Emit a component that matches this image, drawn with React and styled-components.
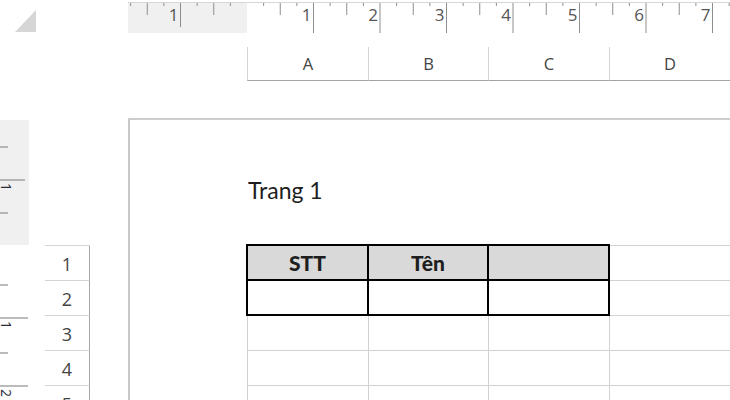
import React from "react";
import styled, { createGlobalStyle } from "styled-components";

const Global = createGlobalStyle`
  html, body { margin: 0; padding: 0; background: #fff; }
`;

const Frame = styled.div`
  width: 730px;
  height: 400px;
  overflow: hidden;
  background: #fff;
  display: flex;
  flex-direction: column;
  font-family: "Open Sans", "Liberation Sans", sans-serif;
`;

const TopBar = styled.div`
  display: flex;
  height: 33px;
  flex: none;
`;

const Corner = styled.div`
  width: 128px;
  flex: none;
  padding: 10px 0 0 15px;
  box-sizing: border-box;
`;

const HRuler = styled.div`
  flex: 1;
  margin-top: 2px;
  border-top: 1px solid #d6d6d6;
  background: linear-gradient(to right, #f0f0f0 0 119px, #fff 119px);
  overflow: hidden;
  svg { display: block; }
`;

const ColHeaderRow = styled.div`
  display: flex;
  margin-top: 14px;
  height: 34px;
  flex: none;
`;

const ColSpacer = styled.div`
  width: 247px;
  flex: none;
`;

const ColHead = styled.div`
  width: ${(p) => p.$w}px;
  flex: none;
  box-sizing: border-box;
  border-left: 1px solid #d5d5d5;
  border-bottom: 1px solid #a3a3a3;
  display: flex;
  align-items: center;
  justify-content: center;
  font-size: 16.5px;
  color: #444;
`;

const Body = styled.div`
  display: flex;
  margin-top: 37px;
  flex: 1;
  min-height: 0;
`;

const VRuler = styled.div`
  width: 29px;
  flex: none;
  background: linear-gradient(to bottom, #fff 0 2px, #f0f0f0 2px 127px, #fff 127px);
  svg { display: block; }
`;

const RowHeads = styled.div`
  width: 45px;
  margin-left: 16px;
  flex: none;
  padding-top: 127px;
`;

const RowHeadList = styled.div`
  border-top: 1px solid #d5d5d5;
`;

const RowHead = styled.div`
  height: 35px;
  box-sizing: border-box;
  border-bottom: 1px solid #d5d5d5;
  border-right: 1px solid #a6a6a6;
  display: flex;
  align-items: center;
  justify-content: center;
  font-size: 18px;
  color: #444;
  padding-top: 2px;
`;

const Page = styled.div`
  flex: 1;
  margin-left: 38px;
  border-top: 2px solid #cdcdcd;
  border-left: 2px solid #c8c8c8;
  padding-left: 116px;
  display: flex;
  flex-direction: column;
`;

const PageHeader = styled.div`
  height: 124px;
  box-sizing: border-box;
  padding: 59px 0 0 2px;
  font-family: Lato, "Open Sans", sans-serif;
  font-size: 23px;
  line-height: 22px;
  color: #1e1e1e;
  flex: none;
`;

const Sheet = styled.table`
  border-collapse: collapse;
  table-layout: fixed;
  width: 483px;
  flex: none;
`;

const Row = styled.tr`
  height: 35px;
`;

const Cell = styled.td`
  padding: 0;
  border: ${(p) => (p.$boxed ? "2px solid #000" : "1px solid #d2d2d2")};
  background: ${(p) => (p.$head ? "#d9d9d9" : "transparent")};
  font-family: Lato, "Open Sans", sans-serif;
  font-weight: 900;
  font-size: 21px;
  color: #1e1e1e;
  text-align: center;
  vertical-align: middle;
`;

function SelectAll() {
  return (
    <svg width="21" height="22" viewBox="0 0 21 22">
      <polygon points="0,22 21,0 21,22" fill="#d6d6d6" />
    </svg>
  );
}

function TopRulerMarks() {
  const inch = 66.5;
  const q = inch / 4;
  const origin = 119;
  const items = [];
  for (let k = -7; k <= 29; k++) {
    if (k === 0) continue;
    const x = origin + k * q;
    if (x > 602) break;
    let len = 3;
    if (k % 4 === 0) len = k < 0 ? 24 : 30;
    else if (k % 2 === 0) len = 12;
    items.push(
      <line key={"t" + k} x1={x} x2={x} y1={0} y2={len} stroke="#8e8e8e" strokeWidth="1" />
    );
    if (k % 4 === 0) {
      items.push(
        <text key={"n" + k} x={x - 2} y={17.5} textAnchor="end" fontSize="17" fill="#555" fontFamily="'Open Sans', sans-serif">
          {Math.abs(k / 4)}
        </text>
      );
    }
  }
  return (
    <svg width="602" height="30">
      {items}
    </svg>
  );
}

function SideRulerMarks() {
  const ticks = [
    { y: 29, len: 8 },
    { y: 62, len: 25 },
    { y: 95, len: 8 },
    { y: 167, len: 8 },
    { y: 200, len: 28 },
    { y: 235, len: 8 },
    { y: 268, len: 28 },
  ];
  const labels = [
    { y: 65, t: "1" },
    { y: 203, t: "1" },
    { y: 271, t: "2" },
  ];
  return (
    <svg width="29" height="282">
      {ticks.map((t, i) => (
        <line key={i} x1={0} x2={t.len} y1={t.y} y2={t.y} stroke="#8e8e8e" strokeWidth="1.2" />
      ))}
      {labels.map((l, i) => (
        <text
          key={"l" + i}
          x={0}
          y={0}
          transform={`translate(1 ${l.y}) rotate(90)`}
          fontSize="14"
          fill="#2a2a3a"
          fontFamily="'Open Sans', sans-serif"
        >
          {l.t}
        </text>
      ))}
    </svg>
  );
}

const columns = [
  { id: "A", w: 121 },
  { id: "B", w: 120 },
  { id: "C", w: 121 },
  { id: "D", w: 121 },
];

const rows = [1, 2, 3, 4, 5];

export default function App() {
  return (
    <>
      <Global />
      <Frame>
        <TopBar>
          <Corner>
            <SelectAll />
          </Corner>
          <HRuler>
            <TopRulerMarks />
          </HRuler>
        </TopBar>
        <ColHeaderRow>
          <ColSpacer />
          {columns.map((c) => (
            <ColHead key={c.id} $w={c.w}>
              {c.id}
            </ColHead>
          ))}
        </ColHeaderRow>
        <Body>
          <VRuler>
            <SideRulerMarks />
          </VRuler>
          <RowHeads>
            <RowHeadList>
              {rows.map((r) => (
                <RowHead key={r}>{r}</RowHead>
              ))}
            </RowHeadList>
          </RowHeads>
          <Page>
            <PageHeader>Trang 1</PageHeader>
            <Sheet>
              <colgroup>
                {columns.map((c) => (
                  <col key={c.id} style={{ width: c.w }} />
                ))}
              </colgroup>
              <tbody>
                <Row>
                  <Cell $boxed $head>STT</Cell>
                  <Cell $boxed $head>Tên</Cell>
                  <Cell $boxed $head></Cell>
                  <Cell></Cell>
                </Row>
                <Row>
                  <Cell $boxed></Cell>
                  <Cell $boxed></Cell>
                  <Cell $boxed></Cell>
                  <Cell></Cell>
                </Row>
                {rows.slice(2).map((r) => (
                  <Row key={r}>
                    {columns.map((c) => (
                      <Cell key={c.id}></Cell>
                    ))}
                  </Row>
                ))}
              </tbody>
            </Sheet>
          </Page>
        </Body>
      </Frame>
    </>
  );
}
